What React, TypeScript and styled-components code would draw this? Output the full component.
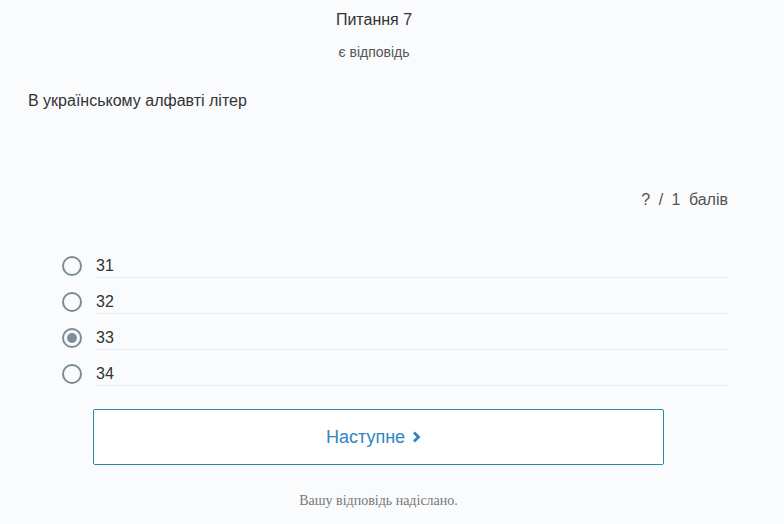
import React, { useState } from "react";
import styled, { createGlobalStyle } from "styled-components";

const Global = createGlobalStyle`
  html, body { margin: 0; padding: 0; background: #f9fbfd; }
  body { font-family: "Liberation Sans", Arial, sans-serif; color: #333; }
`;

const Page = styled.div`
  width: 784px;
  height: 524px;
  box-sizing: border-box;
  display: flex;
  flex-direction: column;
  background: #f9fbfd;
`;

const Header = styled.div`
  width: 708px;
  margin-left: 20px;
  display: flex;
  flex-direction: column;
  align-items: center;
  padding-top: 10px;
`;

const Title = styled.div`
  font-size: 16px;
  line-height: 19px;
  color: #333;
`;

const Status = styled.div`
  margin-top: 15px;
  font-size: 14px;
  line-height: 16px;
  color: #555;
`;

const Question = styled.div`
  margin: 31px 0 0 28px;
  font-size: 16px;
  line-height: 19px;
  color: #333;
`;

const Score = styled.div`
  margin: 80px 56px 0 0;
  align-self: flex-end;
  font-size: 16px;
  line-height: 19px;
  color: #555;
  word-spacing: 4px;
`;

const Options = styled.div`
  margin: 33px 0 0 62px;
  width: 666px;
  display: flex;
  flex-direction: column;
`;

const Row = styled.label`
  display: flex;
  align-items: center;
  height: 36px;
  cursor: pointer;
`;

const Radio = styled.span<{ $checked: boolean }>`
  width: 20px;
  height: 20px;
  box-sizing: border-box;
  border: 2px solid #7d8d96;
  border-radius: 50%;
  display: flex;
  align-items: center;
  justify-content: center;
  flex: none;
  margin-top: 12px;
  &::after {
    content: "";
    width: 10px;
    height: 10px;
    border-radius: 50%;
    background: #7d8d96;
    display: ${(p) => (p.$checked ? "block" : "none")};
  }
`;

const OptionText = styled.span`
  margin-left: 14px;
  flex: 1;
  height: 100%;
  box-sizing: border-box;
  border-bottom: 1px solid #e9edf1;
  display: flex;
  align-items: flex-end;
  padding-bottom: 2px;
  font-size: 16px;
  line-height: 19px;
  color: #333;
`;

const NextButton = styled.button`
  margin: 23px 0 0 93px;
  width: 571px;
  height: 56px;
  box-sizing: border-box;
  border: 1px solid #2a87ad;
  border-radius: 2px;
  background: #fff;
  color: #2d86c4;
  font-family: "Liberation Sans", Arial, sans-serif;
  font-size: 18px;
  display: flex;
  align-items: center;
  justify-content: center;
  gap: 7px;
  padding: 0 10px 0 0;
  cursor: pointer;
`;

const Footer = styled.div`
  margin: 28px 0 0 93px;
  width: 571px;
  text-align: center;
  font-family: "Liberation Serif", "Times New Roman", serif;
  font-size: 14px;
  color: #777;
`;

const options = ["31", "32", "33", "34"];

export default function App() {
  const [sel, setSel] = useState("33");
  return (
    <>
      <Global />
      <Page>
        <Header>
          <Title>Питання 7</Title>
          <Status>є відповідь</Status>
        </Header>
        <Question>В українському алфавті літер</Question>
        <Score>? / 1 балів</Score>
        <Options>
          {options.map((o) => (
            <Row key={o} onClick={() => setSel(o)}>
              <Radio $checked={sel === o} />
              <OptionText>{o}</OptionText>
            </Row>
          ))}
        </Options>
        <NextButton>
          Наступне
          <svg width="9" height="12" viewBox="0 0 9 12">
            <path d="M2 1.5 L6.5 6 L2 10.5" fill="none" stroke="#2d86c4" strokeWidth="2.8" />
          </svg>
        </NextButton>
        <Footer>Вашу відповідь надіслано.</Footer>
      </Page>
    </>
  );
}
